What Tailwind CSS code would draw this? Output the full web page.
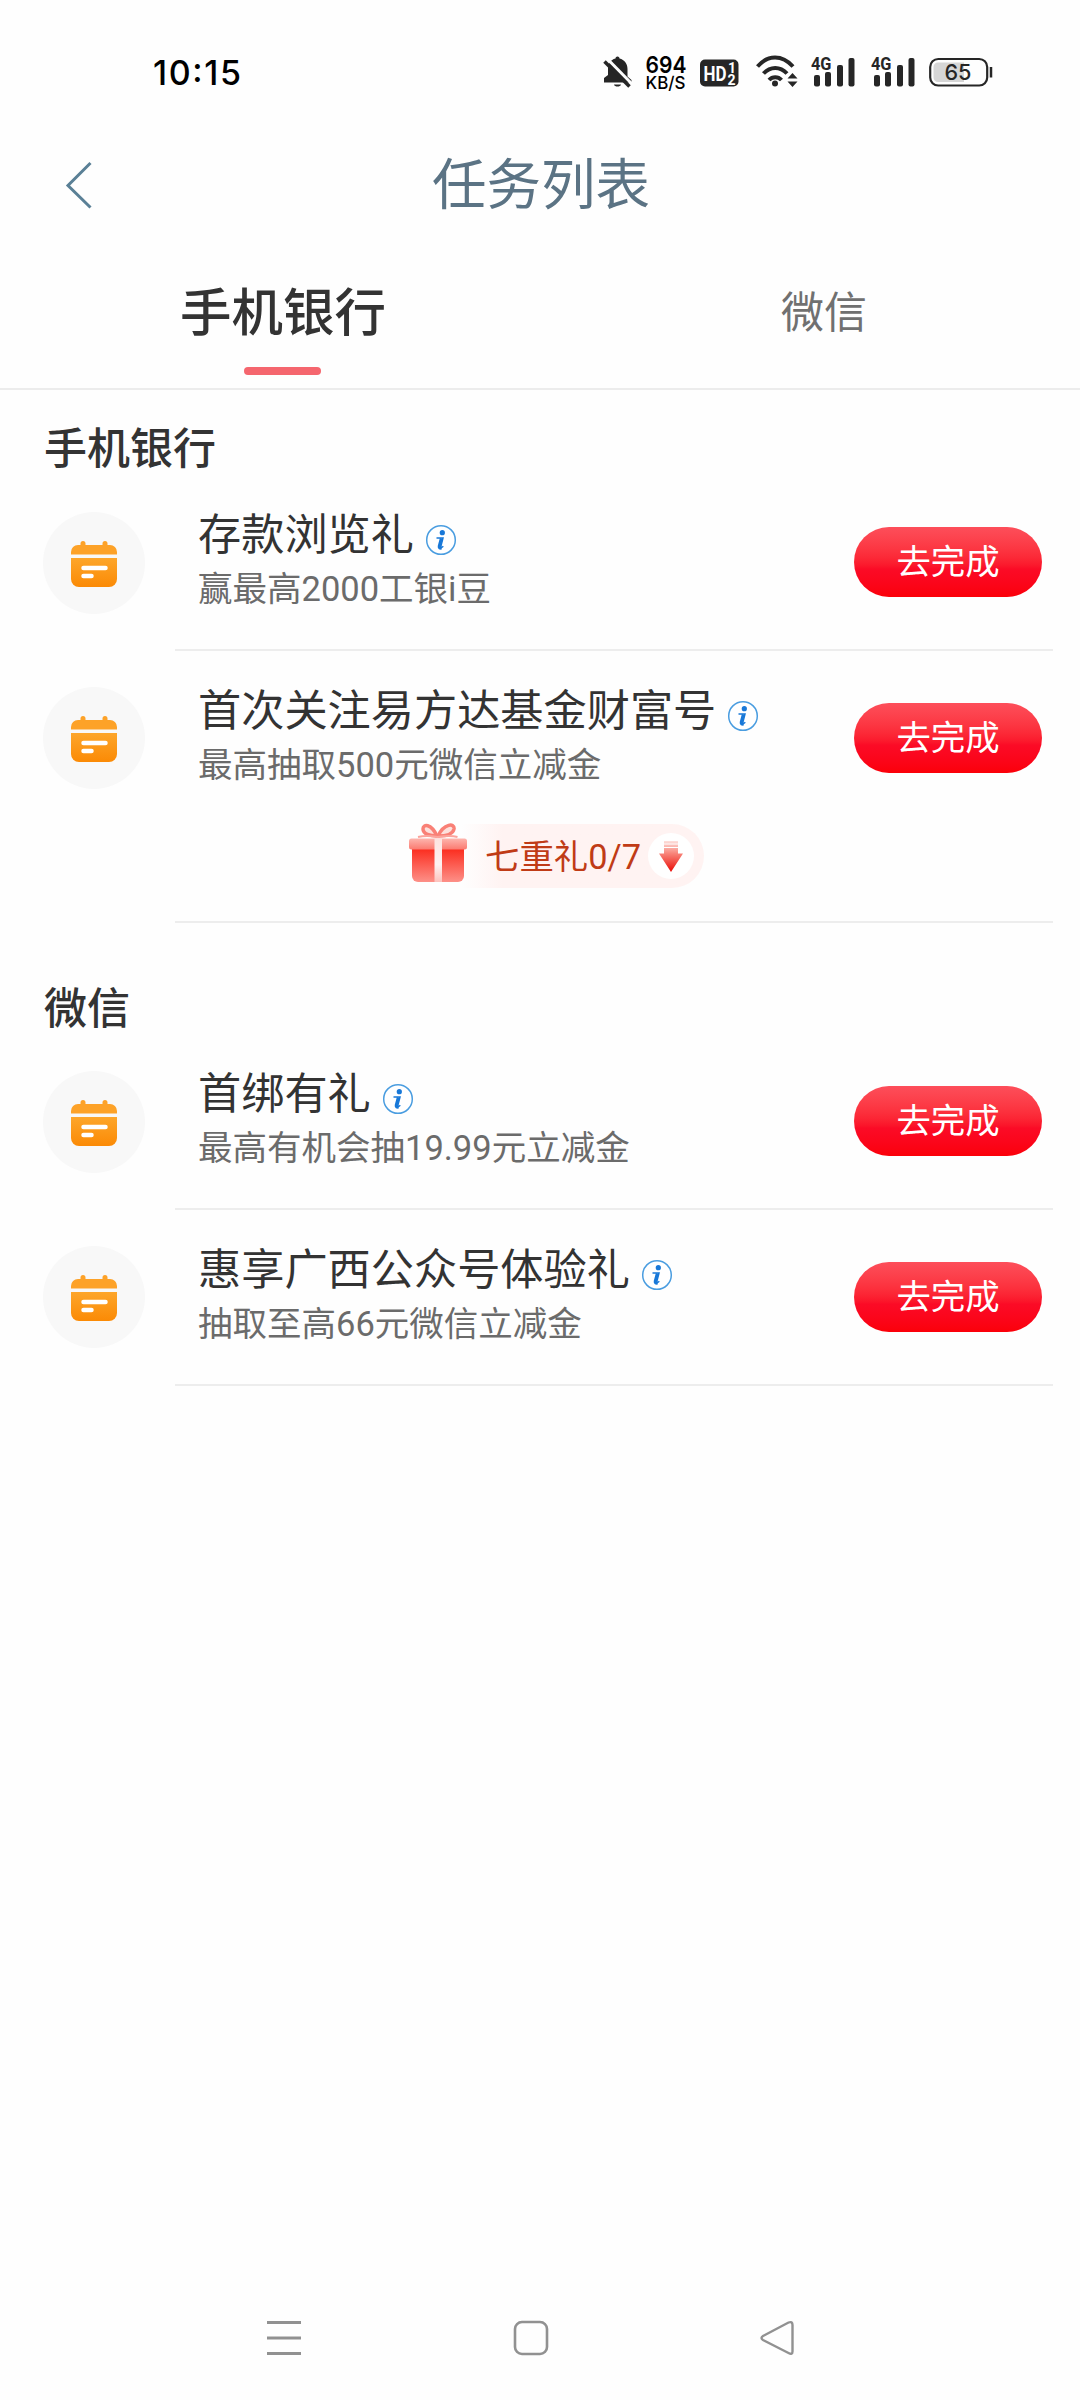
<!DOCTYPE html>
<html lang="zh-CN">
<head>
<meta charset="utf-8">
<title>任务列表</title>
<script src="https://cdn.jsdelivr.net/npm/@tailwindcss/browser@4"></script>
</head>
<body class="bg-[#fefefe] font-['Noto_Sans_CJK_SC',sans-serif] text-[#333]">
<svg width="0" height="0" class="absolute">
  <defs>
    <linearGradient id="orange" x1="0" y1="0" x2="0" y2="1"><stop offset="0" stop-color="#fda62b"/><stop offset="1" stop-color="#fb8a05"/></linearGradient>
    <linearGradient id="box" x1="0" y1="0" x2="0" y2="1"><stop offset="0" stop-color="#fb2a1c"/><stop offset="1" stop-color="#fd9088"/></linearGradient>
    <linearGradient id="lid" x1="0" y1="0" x2="0" y2="1"><stop offset="0" stop-color="#fdb5ae"/><stop offset="1" stop-color="#fb7a70"/></linearGradient>
    <linearGradient id="ribbon" x1="0" y1="0" x2="0" y2="1"><stop offset="0" stop-color="#fde3e0"/><stop offset=".6" stop-color="#fdf2f1"/><stop offset="1" stop-color="#fdc2bd"/></linearGradient>
    <linearGradient id="down" gradientUnits="userSpaceOnUse" x1="0" y1="0" x2="0" y2="31"><stop offset="0" stop-color="#fde0dc"/><stop offset=".4" stop-color="#f8857a"/><stop offset="1" stop-color="#ea0a05"/></linearGradient>
    <symbol id="calendar" viewBox="0 0 46 46">
      <path d="M8 46h30a8 8 0 0 0 8-8V17H0v21a8 8 0 0 0 8 8Z" fill="url(#orange)"/>
      <path d="M0 13.500V11a7 7 0 0 1 7-7h2.500V2.500a2.500 2.500 0 0 1 5 0V4h17V2.500a2.500 2.500 0 0 1 5 0V4H39a7 7 0 0 1 7 7v2.500Z" fill="#fda228"/>
      <path d="M12.500 27h22M12.500 35h8" stroke="#fff" stroke-width="4.500" stroke-linecap="round"/>
    </symbol>
    <symbol id="info" viewBox="0 0 32 32">
      <circle cx="16" cy="16" r="14.300" fill="#fff" stroke="#4a9de0" stroke-width="1.500"/>
      <circle cx="17.300" cy="8.700" r="2.600" fill="#1878d8"/>
      <path d="M11.500 14h6.500l-2.200 8.500c-.3 1.300 1 1.200 2.500-.2" fill="none" stroke="#1878d8" stroke-width="1.500"/>
      <path d="M16.300 14.300l-2.100 8c-.3 1.600.8 2.200 2.300 1.600" fill="none" stroke="#1878d8" stroke-width="3"/>
    </symbol>
    <symbol id="signal" viewBox="0 0 44 40">
      <text x="0" y="17.500" textLength="20.500" lengthAdjust="spacingAndGlyphs" font-family="Roboto" font-weight="700" font-size="18.500" fill="#262626">4G</text>
      <g fill="#262626"><rect x="3" y="23" width="6" height="11.500" rx="2"/><rect x="14" y="20" width="6" height="14.500" rx="2"/><rect x="26" y="13" width="6" height="21.500" rx="2"/><rect x="37.500" y="6" width="6" height="28.500" rx="2"/></g>
    </symbol>
  </defs>
</svg>

<div class="flex h-[2400px] w-[1080px] flex-col">
  <div class="flex h-[144px] items-start pt-[52px] pl-[152px]">
    <svg class="overflow-visible" width="451" height="40"><text x="1" y="33" textLength="88" font-family="Inter" font-weight="500" font-size="34" fill="#000">10:15</text></svg>
    <svg width="43" height="40" viewBox="0 0 43 40">
      <path d="M14.500 4.500c1.400 0 2 1 2 2 5 1.200 8 5.300 8 10.500v7.500l4 3.500v2.500H1V26l4-3V17c0-5 2.500-9.300 7.500-10.500 0-1 .6-2 2-2Z" fill="#262626"/>
      <path d="M11 32.500h7c-.5 2.800-6.500 2.800-7 0Z" fill="#262626"/>
      <path d="M4 6.500 29 32" stroke="#fefefe" stroke-width="3"/><path d="M1.500 9.500 26.500 34.500" stroke="#262626" stroke-width="3.500"/>
    </svg>
    <svg class="overflow-visible" width="54" height="40" viewBox="0 0 54 40" font-family="Inter" fill="#000">
      <text x="-.5" y="21" textLength="41" lengthAdjust="spacingAndGlyphs" font-weight="600" font-size="23">694</text>
      <text x="-.5" y="36.500" textLength="40" lengthAdjust="spacingAndGlyphs" font-weight="500" font-size="17.500">KB/S</text>
    </svg>
    <svg width="56" height="40" viewBox="0 0 56 40" font-family="Roboto" font-weight="700" fill="#fff">
      <rect y="7.500" width="38.500" height="27" rx="5" fill="#262626"/>
      <text x="3.500" y="28.500" textLength="23" lengthAdjust="spacingAndGlyphs" font-size="21">HD</text>
      <text x="28" y="20.500" font-size="14">1</text><text x="27.500" y="32.500" font-size="14">2</text>
    </svg>
    <svg width="55" height="40" viewBox="0 0 55 40" fill="none" stroke="#262626" stroke-width="4">
      <path d="M1.500 14.500C12 2.500 26 2.500 37 14.500M7.500 21.500c7-7.500 16.500-7.500 23.500 0M13 28c3.500-3.800 9-3.800 12.500 0"/>
      <circle cx="19" cy="31.500" r="3" fill="#262626" stroke="none"/>
      <path d="m31.500 26.500 5-5.500 5 5.500ZM31.500 29.500l5 5.500 5-5.500Z" fill="#262626" stroke="none"/>
    </svg>
    <svg width="44" height="40" class="mr-4"><use href="#signal"/></svg>
    <svg width="44" height="40" class="mr-3.5"><use href="#signal"/></svg>
    <svg width="66" height="40" viewBox="0 0 66 40">
      <rect x="1.200" y="7" width="57" height="26.500" rx="8" fill="none" stroke="#262626" stroke-width="2.200"/>
      <path d="M9 10.500h26v19.500H9a4.500 4.500 0 0 1-4.500-4.500v-10.500A4.500 4.500 0 0 1 9 10.500Z" fill="#d6d6d6"/>
      <path d="M62 15v10.500" stroke="#262626" stroke-width="2.500"/>
      <text x="15.500" y="28" textLength="27" lengthAdjust="spacingAndGlyphs" font-family="Inter" font-weight="500" font-size="22" fill="#262626">65</text>
    </svg>
  </div>

  <header class="grid h-[82px] grid-cols-[401px_280px_399px] items-center text-[#5b7384]">
    <svg class="ml-[65px]" width="28" height="48" viewBox="0 0 28 48" fill="none" stroke="#5a8096" stroke-width="3"><path d="M25.500 2 3 24.500l22.500 22"/></svg>
    <h1 class="-mt-2 text-center text-[54.500px] leading-[82px]">任务列表</h1>
  </header>

  <nav class="grid h-[164px] grid-cols-[566px_514px] border-b-2 border-[#ececec]">
    <div class="flex flex-col items-center">
      <span class="mt-[46px] text-[51.500px] leading-[74px] font-medium">手机银行</span>
      <span class="mt-[21px] mr-[1px] h-2 w-[77px] rounded-full bg-[#f5666e]"></span>
    </div>
    <div class="flex justify-center pl-0.5"><span class="mt-[46px] text-[43px] leading-[74px] text-[#707070]">微信</span></div>
  </nav>

  <section class="h-[533px] pr-[27px]">
    <h2 class="h-[85px] pt-[21px] pl-11 text-[43px] leading-[68px] font-medium">手机银行</h2>
    <article class="flex h-[176px] pl-[43px]">
      <div class="mt-[37px] flex size-[102px] items-center justify-center rounded-full bg-[#f8f8f8]"><svg width="46" height="46" class="mt-0.5"><use href="#calendar"/></svg></div>
      <div class="ml-[30px] flex flex-1 border-b-2 border-[#ededed] pl-[23px]">
        <div class="flex-1 pt-[30px]">
          <div class="flex h-[52px] items-center gap-[11px]"><h3 class="text-[43.200px] leading-[52px]">存款浏览礼</h3><svg class="mt-[17px]" width="32" height="32"><use href="#info"/></svg></div>
          <p class="pt-1 font-[Roboto,'Noto_Sans_CJK_SC',sans-serif] text-[34.500px] leading-[56px] text-[#6b6b6b]">赢最高2000工银i豆</p>
        </div>
        <button class="mt-[52px] mr-[11px] h-[70px] w-[188px] rounded-full bg-linear-to-b from-[#fd4e5a] via-[#fb0b26] via-60% to-[#fb0008] text-[34.400px] leading-[62px] text-white"><span class="block h-[69px]">去完成</span></button>
      </div>
    </article>
    <article class="flex h-[272px] pl-[43px]">
      <div class="mt-9 flex size-[102px] items-center justify-center rounded-full bg-[#f8f8f8]"><svg width="46" height="46" class="mt-0.5"><use href="#calendar"/></svg></div>
      <div class="ml-[30px] flex flex-1 flex-col border-b-2 border-[#ededed] pl-[23px]">
        <div class="flex h-[173px]">
          <div class="flex-1 pt-[30px]">
            <div class="flex h-[52px] items-center gap-[11px]"><h3 class="text-[43.200px] leading-[52px]">首次关注易方达基金财富号</h3><svg class="mt-[17px]" width="32" height="32"><use href="#info"/></svg></div>
            <p class="pt-1 font-[Roboto,'Noto_Sans_CJK_SC',sans-serif] text-[34.500px] leading-[56px] text-[#6b6b6b]">最高抽取500元微信立减金</p>
          </div>
          <button class="mt-[52px] mr-[11px] h-[70px] w-[188px] rounded-full bg-linear-to-b from-[#fd4e5a] via-[#fb0b26] via-60% to-[#fb0008] text-[34.400px] leading-[62px] text-white"><span class="block h-[69px]">去完成</span></button>
        </div>
        <div class="ml-[210px] flex h-16 w-[296px] items-center rounded-full bg-linear-to-r from-[#fefefe] from-18% to-[#fff3f2] to-32%">
          <svg width="60" height="60" viewBox="0 0 60 60" class="-mt-1.5">
            <g fill="#fde0dc" stroke="#f98076" stroke-width="3.500"><path d="M29 13C23 0 15 1 15 6c0 5 7 7 14 7Z"/><path d="M30 13C36 0 47 0 46 6c-1 5-8 7-16 7Z"/></g>
            <path d="M10 14c8-2 14-1 19.500 0 6-1 13-2 20 0" fill="none" stroke="#fba49c" stroke-width="2"/>
            <path d="M4 25h52v28a6 6 0 0 1-6 6H10a6 6 0 0 1-6-6Z" fill="url(#box)"/>
            <rect x="1" y="15.500" width="58" height="11" rx="2.500" fill="url(#lid)"/>
            <rect x="26.500" y="15.500" width="7.500" height="43.500" fill="url(#ribbon)"/>
          </svg>
          <span class="ml-[17px] w-[155px] pt-[1px] font-[Roboto,'Noto_Sans_CJK_SC',sans-serif] text-[34.400px] leading-[60px] whitespace-nowrap text-[#c03b16]">七重礼0/7</span>
          <span class="ml-2 flex size-[46px] items-center justify-center rounded-full bg-white"><svg width="24" height="31" viewBox="0 0 24 31" fill="url(#down)"><path d="M5 0h14v2.500H5ZM5 3.500h14v2.500H5ZM5 7h14v5.500h5L12 31 0 12.500h5Z"/></svg></span>
        </div>
      </div>
    </article>
  </section>

  <section class="mt-[27px] pr-[27px]">
    <h2 class="h-[85px] pt-[21px] pl-11 text-[43px] leading-[68px] font-medium">微信</h2>
    <article class="flex h-[175px] pl-[43px]">
      <div class="mt-9 flex size-[102px] items-center justify-center rounded-full bg-[#f8f8f8]"><svg width="46" height="46" class="mt-0.5"><use href="#calendar"/></svg></div>
      <div class="ml-[30px] flex flex-1 border-b-2 border-[#ededed] pl-[23px]">
        <div class="flex-1 pt-[29px]">
          <div class="flex h-[52px] items-center gap-[11px]"><h3 class="text-[43.200px] leading-[52px]">首绑有礼</h3><svg class="mt-[17px]" width="32" height="32"><use href="#info"/></svg></div>
          <p class="pt-1 font-[Roboto,'Noto_Sans_CJK_SC',sans-serif] text-[34.500px] leading-[56px] text-[#6b6b6b]">最高有机会抽19.99元立减金</p>
        </div>
        <button class="mt-[51px] mr-[11px] h-[70px] w-[188px] rounded-full bg-linear-to-b from-[#fd4e5a] via-[#fb0b26] via-60% to-[#fb0008] text-[34.400px] leading-[62px] text-white"><span class="block h-[69px]">去完成</span></button>
      </div>
    </article>
    <article class="flex h-[176px] pl-[43px]">
      <div class="mt-9 flex size-[102px] items-center justify-center rounded-full bg-[#f8f8f8]"><svg width="46" height="46" class="mt-0.5"><use href="#calendar"/></svg></div>
      <div class="ml-[30px] flex flex-1 border-b-2 border-[#ededed] pl-[23px]">
        <div class="flex-1 pt-[30px]">
          <div class="flex h-[52px] items-center gap-[11px]"><h3 class="text-[43.200px] leading-[52px]">惠享广西公众号体验礼</h3><svg class="mt-[17px]" width="32" height="32"><use href="#info"/></svg></div>
          <p class="pt-1 font-[Roboto,'Noto_Sans_CJK_SC',sans-serif] text-[34.500px] leading-[56px] text-[#6b6b6b]">抽取至高66元微信立减金</p>
        </div>
        <button class="mt-[52px] mr-[11px] h-[70px] w-[188px] rounded-full bg-linear-to-b from-[#fd4e5a] via-[#fb0b26] via-60% to-[#fb0008] text-[34.400px] leading-[62px] text-white"><span class="block h-[69px]">去完成</span></button>
      </div>
    </article>
  </section>

  <footer class="mt-auto mb-[43px] flex justify-between pr-[284px] pl-[266px]">
    <svg width="36" height="38" viewBox="0 0 36 38" stroke="#919191" stroke-width="2.800"><path d="M1 3.500h34M1 19h34M1 34.500h34"/></svg>
    <svg width="36" height="38" viewBox="0 0 36 38" fill="none" stroke="#919191" stroke-width="2.600"><rect x="2" y="3" width="32" height="32" rx="7"/></svg>
    <svg width="36" height="38" viewBox="0 0 36 38" fill="none" stroke="#919191" stroke-width="2.400"><path d="M3 17 28.500 3.500Q32.500 2 32.500 6v26.500Q32.500 36 28.500 34L3 21Q0 19 3 17Z"/></svg>
  </footer>
</div>
</body>
</html>
